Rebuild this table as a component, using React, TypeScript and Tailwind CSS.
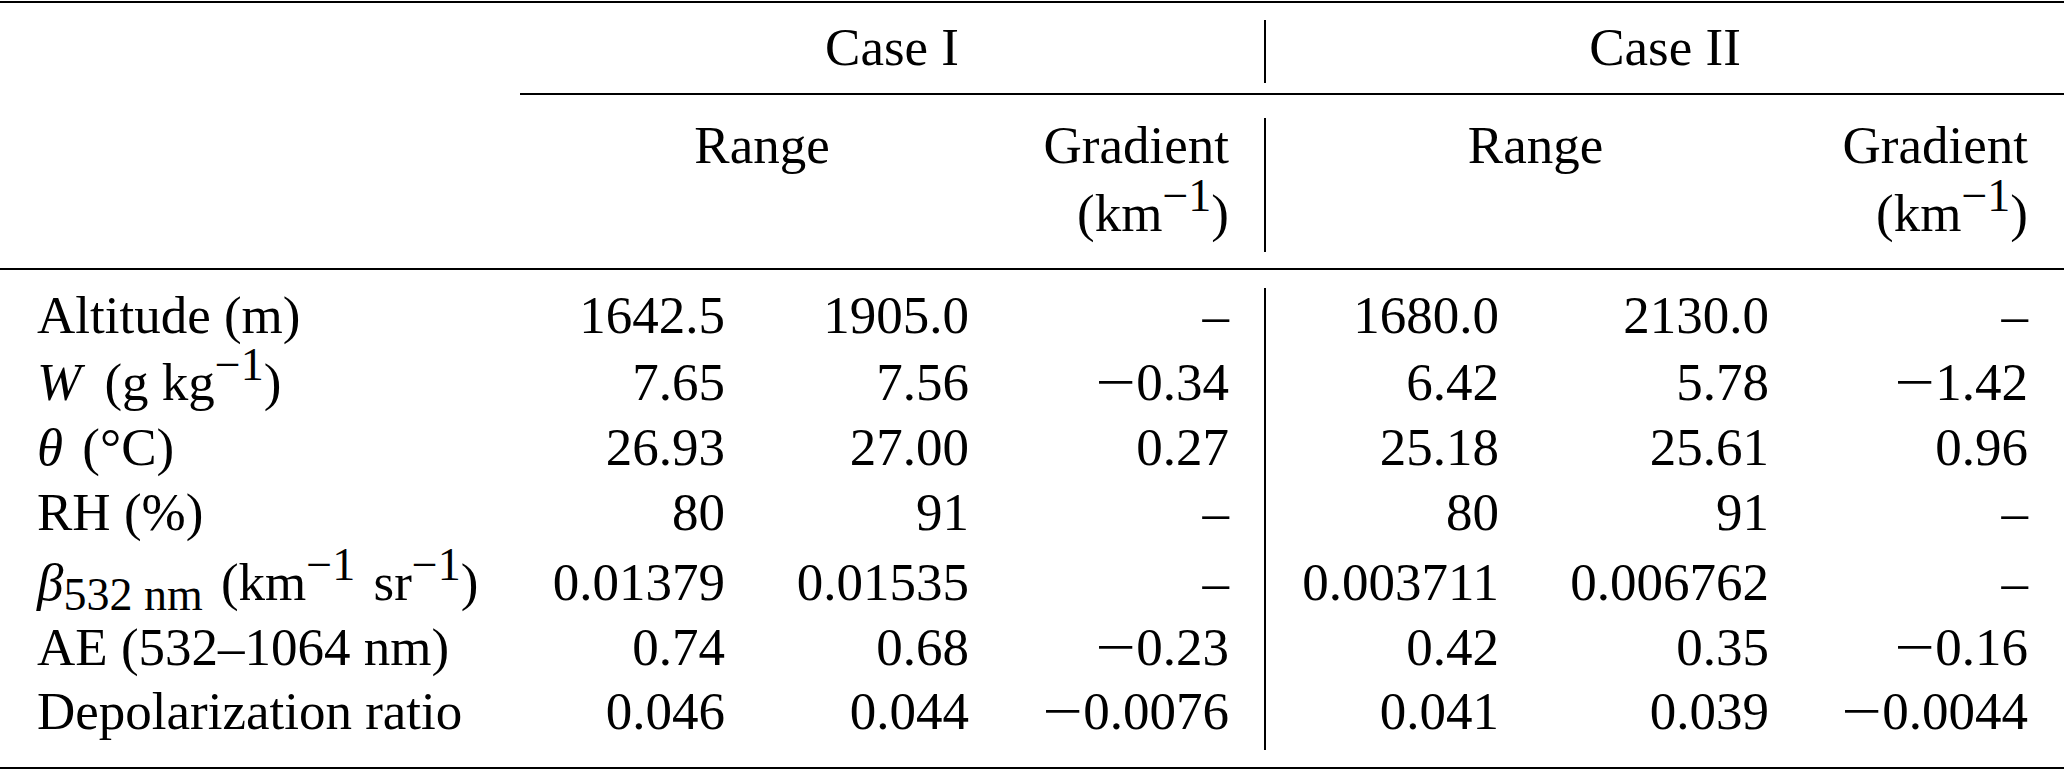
import type { ReactNode } from 'react';

function Sup({ children }: { children: ReactNode }) {
  return <span className="text-[46px] leading-[0] align-[20px]">{children}</span>;
}

function Sub({ children }: { children: ReactNode }) {
  return <span className="text-[46px] leading-[0] align-[-10px]">{children}</span>;
}

// math minus in the source is wider than the font's own glyph
function Num({ v }: { v: string }) {
  if (v.startsWith('−')) {
    return (
      <>
        <span className="inline-block scale-x-[1.35] ml-[9px] mr-[5px]">−</span>
        {v.slice(1)}
      </>
    );
  }
  return <>{v}</>;
}

type Row = {
  label: ReactNode;
  one: string[];
  two: string[];
  h: string;
};

const rows: Row[] = [
  { label: 'Altitude (m)', one: ['1642.5', '1905.0', '–'], two: ['1680.0', '2130.0', '–'], h: 'h-[67px]' },
  {
    label: (
      <>
        <i className="mr-[10px]">W</i> (g kg<Sup>−1</Sup>)
      </>
    ),
    one: ['7.65', '7.56', '−0.34'],
    two: ['6.42', '5.78', '−1.42'],
    h: 'h-[65px]',
  },
  {
    label: (
      <>
        <i className="mr-[6px]">θ</i> (°C)
      </>
    ),
    one: ['26.93', '27.00', '0.27'],
    two: ['25.18', '25.61', '0.96'],
    h: 'h-[65px]',
  },
  { label: 'RH (%)', one: ['80', '91', '–'], two: ['80', '91', '–'], h: 'h-[70px]' },
  {
    label: (
      <>
        <i>β</i>
        <Sub>532 nm</Sub>
        <span className="ml-[5px]"> (km</span>
        <Sup>−1</Sup>
        <span className="ml-[5px]"> sr</span>
        <Sup>−1</Sup>)
      </>
    ),
    one: ['0.01379', '0.01535', '–'],
    two: ['0.003711', '0.006762', '–'],
    h: 'h-[65px]',
  },
  { label: 'AE (532–1064 nm)', one: ['0.74', '0.68', '−0.23'], two: ['0.42', '0.35', '−0.16'], h: 'h-[64px]' },
  {
    label: 'Depolarization ratio',
    one: ['0.046', '0.044', '−0.0076'],
    two: ['0.041', '0.039', '−0.0044'],
    h: 'h-[65px]',
  },
];

function Gradient() {
  return (
    <>
      <div>Gradient</div>
      <div>
        (km<Sup>−1</Sup>)
      </div>
    </>
  );
}

export default function App() {
  return (
    <div className="w-[2067px] h-[770px] bg-white pt-[1px] text-black text-[53px] font-['Liberation_Serif',serif] whitespace-nowrap">
      <div className="w-[2064px]">
        {/* top rule */}
        <div className="h-[2px] bg-black" />

        {/* Case I / Case II */}
        <div className="flex h-[90px] leading-[65px]">
          <div className="w-[520px]" />
          <div className="w-[744px] pt-[12px] text-center">Case I</div>
          <div className="w-[2px] mt-[17px] h-[63px] bg-black" />
          <div className="w-[798px] pt-[12px] text-center">Case II</div>
        </div>

        <div className="ml-[520px] h-[2px] bg-black" />

        {/* Range / Gradient */}
        <div className="flex h-[173px] leading-[68px]">
          <div className="w-[520px]" />
          <div className="w-[484px] pt-[16px] text-center">Range</div>
          <div className="w-[260px] pt-[16px] pr-[35px] text-right">
            <Gradient />
          </div>
          <div className="w-[2px] mt-[23px] h-[134px] bg-black" />
          <div className="w-[539px] pt-[16px] text-center">Range</div>
          <div className="w-[259px] pt-[16px] pr-[36px] text-right">
            <Gradient />
          </div>
        </div>

        {/* mid rule */}
        <div className="h-[2px] bg-black" />

        {/* body */}
        <div className="flex leading-[65px]">
          <div className="w-[1264px] pt-[13px] pb-[23px]">
            {rows.map((r, i) => (
              <div key={i} className={`flex ${r.h}`}>
                <div className="w-[520px] pl-[37px]">{r.label}</div>
                <div className="w-[241px] pr-[36px] text-right"><Num v={r.one[0]} /></div>
                <div className="w-[243px] pr-[35px] text-right"><Num v={r.one[1]} /></div>
                <div className="w-[260px] pr-[35px] text-right"><Num v={r.one[2]} /></div>
              </div>
            ))}
          </div>
          <div className="w-[2px] mt-[18px] mb-[17px] bg-black" />
          <div className="w-[798px] pt-[13px] pb-[23px]">
            {rows.map((r, i) => (
              <div key={i} className={`flex ${r.h}`}>
                <div className="w-[269px] pr-[36px] text-right"><Num v={r.two[0]} /></div>
                <div className="w-[270px] pr-[36px] text-right"><Num v={r.two[1]} /></div>
                <div className="w-[259px] pr-[36px] text-right"><Num v={r.two[2]} /></div>
              </div>
            ))}
          </div>
        </div>

        {/* bottom rule */}
        <div className="h-[2px] bg-black" />
      </div>
    </div>
  );
}
